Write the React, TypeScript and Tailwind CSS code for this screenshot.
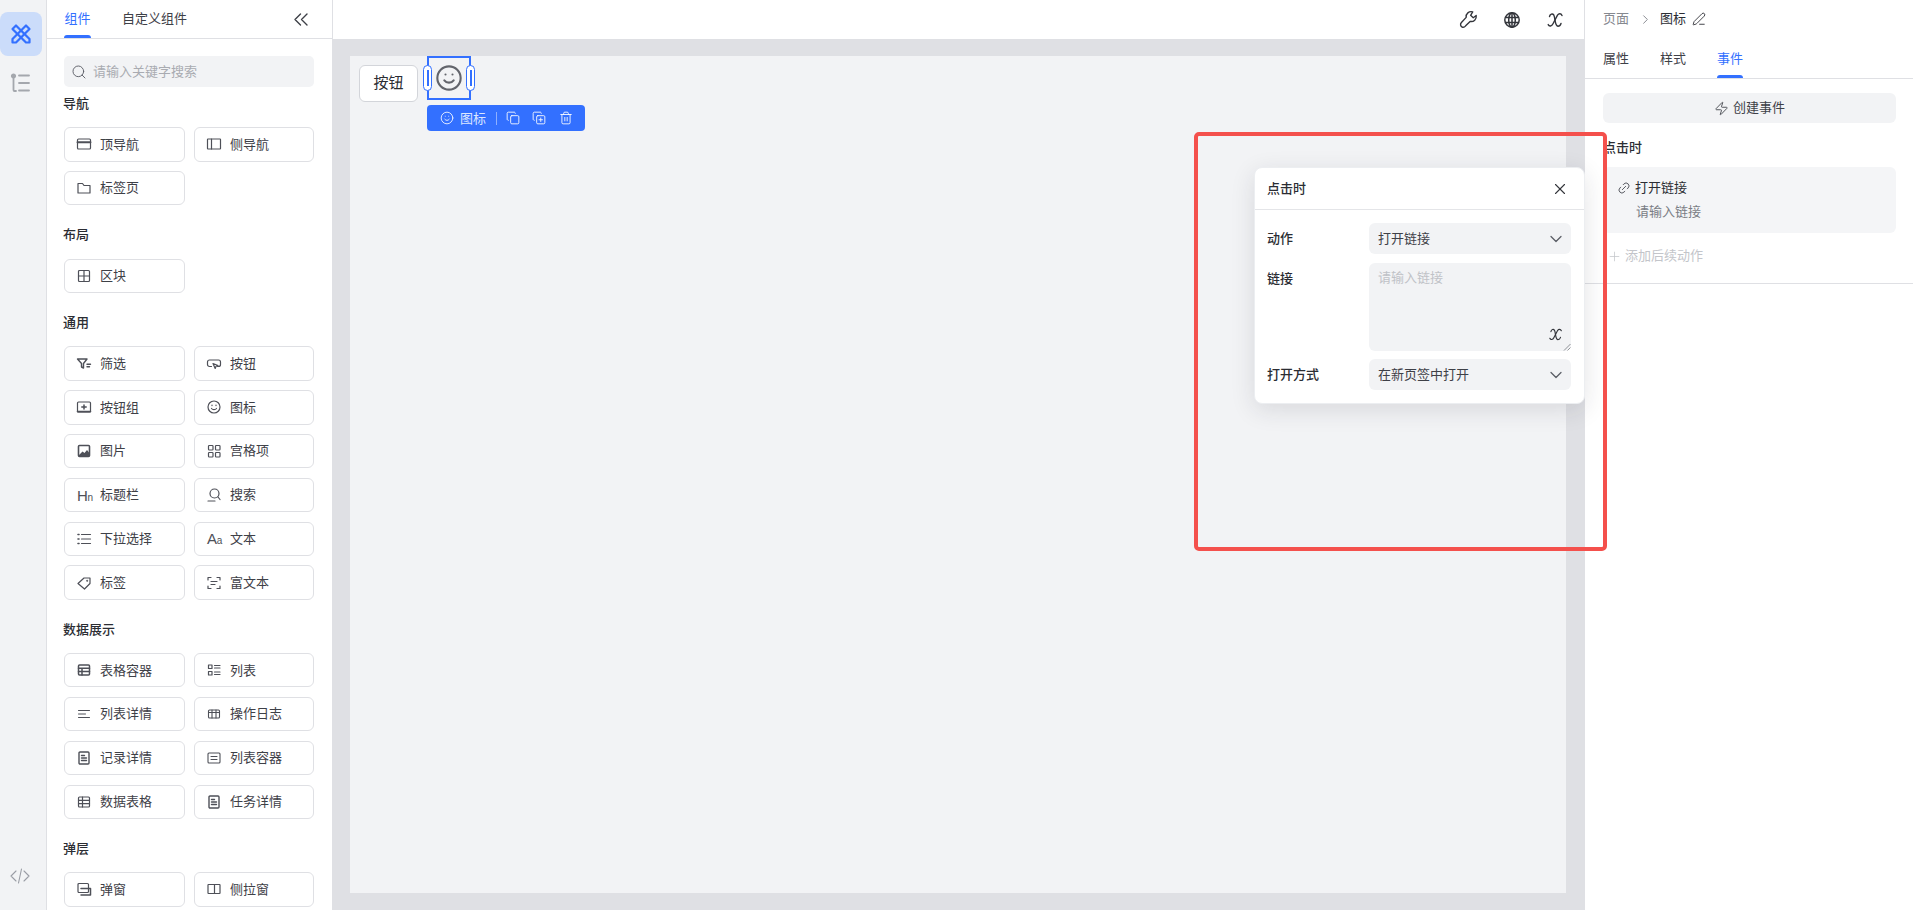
import React from 'react';
import {
  ChevronDown,
  ChevronRight,
  Copy,
  CopyPlus,
  Link2,
  PenLine,
  Plus,
  Search,
  Smile,
  Trash2,
  X,
  Zap,
} from 'lucide-react';

// Small wrapper so the hand-drawn component glyphs share one stroke style
const Ico: React.FC<{ children: React.ReactNode; size?: number; sw?: number }> = ({ children, size = 16, sw = 1.2 }) => (
  <svg
    width={size}
    height={size}
    viewBox="0 0 16 16"
    fill="none"
    stroke="currentColor"
    strokeWidth={sw}
    strokeLinecap="round"
    strokeLinejoin="round"
    className="shrink-0"
  >
    {children}
  </svg>
);

// The script "x" used for variables
const MathX: React.FC<{ size?: number }> = ({ size = 18 }) => (
  <svg width={size} height={size} viewBox="0 0 18 18" fill="none" stroke="currentColor" strokeWidth="1.4" strokeLinecap="round">
    <path d="M3.5 5.5 C4 3 6.5 2 7.8 4 C9.5 7 8.5 15 12 15.2 C13.5 15.2 14.5 14 15 12.5" />
    <path d="M16 4.5 C15 2.3 12.8 2.3 11.5 4.2 L7 12.8 C5.8 15.3 3.2 15.8 2.2 13.6" />
  </svg>
);

const icons: Record<string, React.ReactNode> = {
  top: (
    <Ico>
      <rect x="1.5" y="3" width="13" height="10" rx="1" />
      <path d="M1.5 6.3h13" strokeWidth="1.9" />
    </Ico>
  ),
  side: (
    <Ico>
      <rect x="1.5" y="3" width="13" height="10" rx="0.5" />
      <path d="M5.5 3v10" />
    </Ico>
  ),
  tabs: (
    <Ico>
      <path d="M2 3.5h4.5l1.5 2h6v7.5h-12z" />
    </Ico>
  ),
  block: (
    <Ico>
      <rect x="2.5" y="2.5" width="11" height="11" rx="1" />
      <path d="M8 2.5v11M2.5 8h11" />
    </Ico>
  ),
  filter: (
    <Ico sw={1.4}>
      <path d="M1.5 3h9.5L7.5 7.5V12l-2-1V7.5z" />
      <path d="M11 8.2h3.5M11 10.7h2.5" />
    </Ico>
  ),
  button: (
    <Ico>
      <path d="M5.5 10.5H3.5C2.3 10.5 1.5 9.5 1.5 8.5V6C1.5 4.8 2.3 4 3.5 4h9c1.2 0 2 .8 2 2v2.5c0 1-.8 2-2 2h-1" />
      <path d="M7 7.5l5 2-2 .8-.8 2.2z" />
    </Ico>
  ),
  group: (
    <Ico>
      <rect x="1.5" y="3" width="13" height="10" rx="1" />
      <path d="M5.8 8h4.4M8 6v4" strokeWidth="1.5" />
      <path d="M1.5 12.6h13" strokeWidth="1.6" />
    </Ico>
  ),
  smile: (
    <Ico>
      <circle cx="8" cy="8" r="6" />
      <path d="M5.5 9.5c1.2 1.5 3.8 1.5 5 0" />
      <path d="M6 6v.6M10 6v.6" />
    </Ico>
  ),
  image: (
    <Ico>
      <rect x="2.5" y="2.5" width="11" height="11" rx="1" strokeWidth="1.6" />
      <path d="M3 12l3.5-3.5 2 1.5 2.5-3 2 2.5V13H3z" fill="currentColor" stroke="none" />
    </Ico>
  ),
  grid: (
    <Ico>
      <rect x="2.5" y="2.5" width="4.5" height="4.5" rx="0.8" />
      <rect x="9.5" y="2.5" width="4.5" height="4.5" rx="0.8" />
      <rect x="2.5" y="9.5" width="4.5" height="4.5" rx="0.8" />
      <rect x="9.5" y="9.5" width="4.5" height="4.5" rx="0.8" />
    </Ico>
  ),
  search: (
    <Ico>
      <circle cx="8.5" cy="6.5" r="4.5" />
      <path d="M12 10l2 2.5M2 14h7" />
    </Ico>
  ),
  select: (
    <Ico>
      <path d="M5.5 3.5h9M5.5 8h9M5.5 12.5h9" />
      <path d="M2 3.5h1M2 8h1M2 12.5h1" strokeWidth="1.6" />
    </Ico>
  ),
  tag: (
    <Ico>
      <path d="M2 8.5L8 3h6v5.5L8.5 14z" />
      <circle cx="11.2" cy="5.8" r="0.4" />
    </Ico>
  ),
  rich: (
    <Ico>
      <path d="M2 5V2.5h3M11 2.5h3V5M14 11v2.5h-3M5 13.5H2V11" />
      <path d="M5 6.5h6M5 9.5h4" />
    </Ico>
  ),
  table: (
    <Ico>
      <rect x="2.5" y="3" width="11" height="10" rx="1" strokeWidth="1.5" />
      <path d="M2.5 6.3h11M2.5 9.6h11M6 6.3V13" strokeWidth="1.5" />
    </Ico>
  ),
  list: (
    <Ico>
      <rect x="2.5" y="3" width="3.5" height="3.5" />
      <rect x="2.5" y="9.5" width="3.5" height="3.5" />
      <path d="M8.5 3.5H14M8.5 6H14M8.5 10H14M8.5 12.5H14" />
    </Ico>
  ),
  lines: (
    <Ico sw={1}>
      <path d="M2.5 4.5h11M2.5 8h7M2.5 11.5h11" />
    </Ico>
  ),
  log: (
    <Ico sw={1.1}>
      <rect x="2.5" y="4" width="11" height="8" rx="1" />
      <path d="M2.5 6.5h11M6 4v8M10 4v8" />
    </Ico>
  ),
  record: (
    <Ico sw={1.4}>
      <rect x="3" y="2" width="10" height="12" rx="1" />
      <path d="M5.5 5.5h3M5.5 8h5M5.5 10.5h5" />
    </Ico>
  ),
  listbox: (
    <Ico sw={1.1}>
      <rect x="2" y="3" width="12" height="10" rx="1" />
      <path d="M5 6.5h6M5 9.5h6" />
    </Ico>
  ),
  datagrid: (
    <Ico>
      <rect x="2.5" y="3" width="11" height="10" rx="1" />
      <path d="M2.5 6.3h11M2.5 9.6h11M6.5 3v10" />
    </Ico>
  ),
  modal: (
    <Ico>
      <rect x="2" y="2.5" width="10.5" height="9" rx="1" />
      <path d="M5 7.5h9.5V14H5" strokeWidth="1.5" />
    </Ico>
  ),
  drawer: (
    <Ico>
      <rect x="2" y="3.5" width="12" height="9" rx="0.5" />
      <path d="M8.5 3.5v9" />
    </Ico>
  ),
};

type Item = { name: string; icon: React.ReactNode };

const textIcon = (big: string, small: string) => (
  <span className="pl-px text-[15px] leading-none tracking-[-0.3px] text-[#4e5058] font-['Liberation_Sans',sans-serif]">
    {big}
    <span className="text-[10px]">{small}</span>
  </span>
);

const sections: { title: string; items: Item[] }[] = [
  {
    title: '导航',
    items: [
      { name: '顶导航', icon: icons.top },
      { name: '侧导航', icon: icons.side },
      { name: '标签页', icon: icons.tabs },
    ],
  },
  { title: '布局', items: [{ name: '区块', icon: icons.block }] },
  {
    title: '通用',
    items: [
      { name: '筛选', icon: icons.filter },
      { name: '按钮', icon: icons.button },
      { name: '按钮组', icon: icons.group },
      { name: '图标', icon: icons.smile },
      { name: '图片', icon: icons.image },
      { name: '宫格项', icon: icons.grid },
      { name: '标题栏', icon: textIcon('H', 'n') },
      { name: '搜索', icon: icons.search },
      { name: '下拉选择', icon: icons.select },
      { name: '文本', icon: textIcon('A', 'a') },
      { name: '标签', icon: icons.tag },
      { name: '富文本', icon: icons.rich },
    ],
  },
  {
    title: '数据展示',
    items: [
      { name: '表格容器', icon: icons.table },
      { name: '列表', icon: icons.list },
      { name: '列表详情', icon: icons.lines },
      { name: '操作日志', icon: icons.log },
      { name: '记录详情', icon: icons.record },
      { name: '列表容器', icon: icons.listbox },
      { name: '数据表格', icon: icons.datagrid },
      { name: '任务详情', icon: icons.record },
    ],
  },
  {
    title: '弹层',
    items: [
      { name: '弹窗', icon: icons.modal },
      { name: '侧拉窗', icon: icons.drawer },
    ],
  },
];

const Rail = () => (
  <div className="w-[47px] shrink-0 h-full flex flex-col items-start bg-[#f2f3f5] border-r border-[#dfe0e4]">
    <div className="mt-3 w-[42px] h-11 rounded-lg bg-[#cbdcfa] flex items-center justify-center text-[#3370ff]">
      <svg width="24" height="24" viewBox="0 0 24 24" fill="none" stroke="currentColor" strokeWidth="2.2" strokeLinejoin="round">
        <path d="M3.5 7L7 3.5l13.5 13.5V20.5H17z" />
        <path d="M20.5 7L17 3.5 3.5 17v3.5H7z" />
      </svg>
    </div>
    <div className="mt-4 w-[42px] flex justify-center text-[#a4a7ad]">
      <svg width="22" height="22" viewBox="0 0 22 22" fill="none" stroke="currentColor" strokeWidth="1.8" strokeLinecap="round">
        <circle cx="3.5" cy="4" r="1.7" fill="currentColor" />
        <path d="M3.5 5v13c0 .8.5 1 1 1h1.5M9 3.5h10M9 11h10M9 18.5h10" />
      </svg>
    </div>
    <div className="mt-auto mb-6 w-10 flex justify-center text-[#9a9da5]">
      <svg width="20" height="20" viewBox="0 0 20 20" fill="none" stroke="currentColor" strokeWidth="1.1" strokeLinecap="round" strokeLinejoin="round">
        <path d="M6 5l-5 5 5 5M14 5l5 5-5 5M11.5 3L8.5 17" />
      </svg>
    </div>
  </div>
);

const ComponentPanel = () => (
  <div className="w-[286px] shrink-0 h-full flex flex-col overflow-hidden bg-white border-r border-[#dfe0e4]">
    <div className="h-[39px] shrink-0 flex items-start border-b border-[#dfe0e4] px-[17px] text-[13px] relative">
      <div className="relative h-[38px] w-[27px] flex items-center justify-center text-[#3370ff]">
        组件
        <span className="absolute bottom-0 left-0 right-0 h-[3px] rounded-t-[3px] bg-[#3370ff]" />
      </div>
      <div className="ml-[31px] h-[38px] flex items-center text-[#3e4047]">自定义组件</div>
      <div className="ml-auto mr-[7px] h-[38px] flex items-center text-[#3e4047]">
        <svg width="14" height="13" viewBox="0 0 14 13" fill="none" stroke="currentColor" strokeWidth="1.4" strokeLinecap="round" strokeLinejoin="round">
          <path d="M6.5 1L1 6.5 6.5 12M13 1L7.5 6.5 13 12" />
        </svg>
      </div>
    </div>
    <div className="px-[17px]">
      <div className="mt-[17px] h-[31px] w-[250px] rounded-[5px] bg-[#f2f3f5] flex items-center pl-[7px] text-[#5b5e66]">
        <Search size={16} strokeWidth={1.4} />
        <span className="ml-[6px] text-[13px] text-[#a9abb1]">请输入关键字搜索</span>
      </div>
      <div className="mt-[6.5px]">
        {sections.map((s, i) => (
          <div key={s.title} className={i === 0 ? '' : 'mt-[19.6px]'}>
            <div className="h-5 mb-[13.8px] -ml-px flex items-center text-[13px] font-medium text-[#2b2d33]">{s.title}</div>
            <div className="grid grid-cols-[121px_120px] gap-x-[9px] gap-y-[9.5px]">
              {s.items.map((it) => (
                <div
                  key={it.name}
                  className="h-[34.3px] rounded-[6px] border border-[#dfe0e4] bg-white flex items-center gap-2 pl-[11px] text-[13px] text-[#3e4047]"
                >
                  <span className="w-4 flex items-center text-[#4e5058]">{it.icon}</span>
                  <span>{it.name}</span>
                </div>
              ))}
            </div>
          </div>
        ))}
      </div>
    </div>
  </div>
);

const Canvas = () => (
  <div className="flex-1 min-w-0 h-full flex flex-col">
    <div className="h-[39px] shrink-0 bg-white flex items-center justify-end gap-[25px] pr-5 text-[#33353b]">
      <svg width="19" height="19" viewBox="0 0 18 18" fill="none" stroke="currentColor" strokeWidth="1.3" strokeLinejoin="round">
        <path d="M13 1.8C9.5.8 6.3 3.5 6.8 7L2.3 11.800C.8 13.500 1.500 15.500 3 16.200C4.300 16.700 5.500 16 6.300 15L10.500 10.800C14 11.500 16.800 8.800 16.300 5.200L13.500 7.300L11 5z" />
      </svg>
      <svg width="18" height="18" viewBox="0 0 18 18" fill="none" stroke="currentColor" strokeWidth="1.5">
        <circle cx="9" cy="9" r="7.2" />
        <ellipse cx="9" cy="9" rx="3.3" ry="7.2" />
        <path d="M2.3 6.5h13.4M2.3 11.5h13.4M9 1.8v14.4" />
      </svg>
      <MathX size={18} />
    </div>
    <div className="flex-1 bg-[#dfe0e4] pt-[17px] pl-[17px] pr-[18px] pb-[17px]">
      <div className="h-full bg-[#f2f3f5] flex items-start">
        <button className="ml-[9px] mt-[9px] w-[59px] h-[37px] rounded-[6px] border border-[#d3d5da] bg-white text-[15px] text-[#2b2d33]">
          按钮
        </button>
        <div className="relative ml-[9px] w-[44px] h-[44px] border-2 border-[#3370ff] flex items-center justify-center text-[#63656c]">
          <Smile size={28} strokeWidth={1.8} />
          <span className="absolute left-[-6px] top-[7px] w-[9px] h-[26px] rounded-full bg-white border border-[#3370ff] flex items-center justify-center">
            <span className="w-[2px] h-[16px] bg-[#3370ff]" />
          </span>
          <span className="absolute right-[-6px] top-[7px] w-[9px] h-[26px] rounded-full bg-white border border-[#3370ff] flex items-center justify-center">
            <span className="w-[2px] h-[16px] bg-[#3370ff]" />
          </span>
          <div className="absolute left-[-2px] top-[47px] w-[158px] h-[26px] rounded-[4px] bg-[#3370ff] flex items-center pl-[13px] text-white">
            <Smile size={14} strokeWidth={1.4} />
            <span className="ml-[6px] text-[13px] leading-none text-[#dbe6ff] whitespace-nowrap">图标</span>
            <span className="ml-[10px] w-px h-[13px] bg-[#8fb0ff]" />
            <span className="ml-[9px]">
              <Copy size={14} strokeWidth={1.5} />
            </span>
            <span className="ml-[12px]">
              <CopyPlus size={14} strokeWidth={1.5} />
            </span>
            <span className="ml-[13px]">
              <Trash2 size={14} strokeWidth={1.5} />
            </span>
          </div>
        </div>
      </div>
    </div>
  </div>
);

const RightPanel = () => (
  <div className="w-[329px] shrink-0 h-full flex flex-col bg-white border-l border-[#dfe0e4]">
    <div className="h-[38px] shrink-0 flex items-center pl-[18px] text-[13px]">
      <span className="text-[#85888f]">页面</span>
      <ChevronRight size={15} strokeWidth={1.4} className="ml-[9px] text-[#7a7d85]" />
      <span className="ml-[7px] text-[#2b2d33]">图标</span>
      <PenLine size={14} strokeWidth={1.5} className="ml-[6px] text-[#2b2d33]" />
    </div>
    <div className="h-[41px] shrink-0 flex items-start gap-[31px] pl-[18px] border-b border-[#dfe0e4] text-[13px] text-[#3e4047]">
      <span className="h-10 pt-[2px] flex items-center">属性</span>
      <span className="h-10 pt-[2px] flex items-center">样式</span>
      <span className="relative h-10 pt-[2px] flex items-center text-[#3370ff]">
        事件
        <span className="absolute bottom-0 left-0 right-0 h-[3px] rounded-t-[3px] bg-[#3370ff]" />
      </span>
    </div>
    <div className="px-[18px] pt-[14px] pb-[17px] border-b border-[#dfe0e4]">
      <div className="w-[293px] h-[30px] rounded-[6px] bg-[#f2f3f5] flex items-center justify-center gap-1 text-[13px] text-[#3e4047]">
        <Zap size={15} strokeWidth={1.4} />
        创建事件
      </div>
      <div className="mt-[15px] h-5 flex items-center text-[13px] font-medium text-[#2b2d33]">点击时</div>
      <div className="mt-[9px] w-[293px] h-[66px] rounded-[6px] bg-[#f4f5f7] pl-[14px] pt-[11px]">
        <div className="flex items-center h-5 text-[13px] text-[#2b2d33]">
          <Link2 size={14} strokeWidth={1.5} className="-rotate-45 text-[#4e5058]" />
          <span className="ml-1">打开链接</span>
        </div>
        <div className="ml-[19px] mt-1 h-5 flex items-center text-[13px] text-[#7a7d85]">请输入链接</div>
      </div>
      <div className="mt-[13px] h-5 flex items-center pl-1 text-[13px] text-[#c3c5ca]">
        <Plus size={15} strokeWidth={1.2} />
        <span className="ml-[3px]">添加后续动作</span>
      </div>
    </div>
  </div>
);

const SelectBox: React.FC<{ value: string }> = ({ value }) => (
  <div className="h-[31px] rounded-[6px] bg-[#f2f3f5] flex items-center justify-between pl-[9px] pr-[5px] text-[13px] text-[#3e4047]">
    {value}
    <ChevronDown size={20} strokeWidth={1.5} className="text-[#5b5e66]" />
  </div>
);

// Popup and the red annotation float over the three columns
const EventPopup = () => (
  <div className="absolute left-[1254px] top-[167px] w-[331px] h-[237px] rounded-lg bg-white shadow-[0_6px_24px_rgba(30,35,50,0.12)] border border-[#eceef1] box-border">
    <div className="h-[42px] flex items-center justify-between border-b border-[#e4e5e8] pl-3 pr-[15px] text-[13px] font-medium text-[#2b2d33]">
      点击时
      <X size={18} strokeWidth={1.5} className="text-[#33353b]" />
    </div>
    <div className="grid grid-cols-[102px_202px] gap-y-2 pl-3 pt-[13px] text-[13px] text-[#2b2d33]">
      <div className="h-[31px] flex items-center font-medium">动作</div>
      <SelectBox value="打开链接" />
      <div className="mt-px h-[31px] flex items-center font-medium">链接</div>
      <div className="relative mt-px h-[88px] rounded-[6px] bg-[#f2f3f5] pl-[9px] pt-[5px] text-[#c0c2c7]">
        请输入链接
        <span className="absolute right-2 bottom-[9px] text-[#33353b]">
          <MathX size={15} />
        </span>
        <svg width="8" height="8" viewBox="0 0 8 8" className="absolute right-0 bottom-0 text-[#777a80]" stroke="currentColor" strokeWidth="0.8">
          <path d="M1 7.5L7.5 1M4.5 7.5L7.5 4.5" />
        </svg>
      </div>
      <div className="h-[31px] flex items-center font-medium">打开方式</div>
      <SelectBox value="在新页签中打开" />
    </div>
  </div>
);

export default function App() {
  return (
    <div className="relative w-[1913px] h-[910px] overflow-hidden flex bg-white font-['Inter','Noto_Sans_CJK_SC',sans-serif]">
      <Rail />
      <ComponentPanel />
      <Canvas />
      <RightPanel />
      <EventPopup />
      <div className="absolute left-[1194px] top-[132px] w-[413px] h-[419px] rounded-[5px] border-4 border-[#f4504c] pointer-events-none" />
    </div>
  );
}
